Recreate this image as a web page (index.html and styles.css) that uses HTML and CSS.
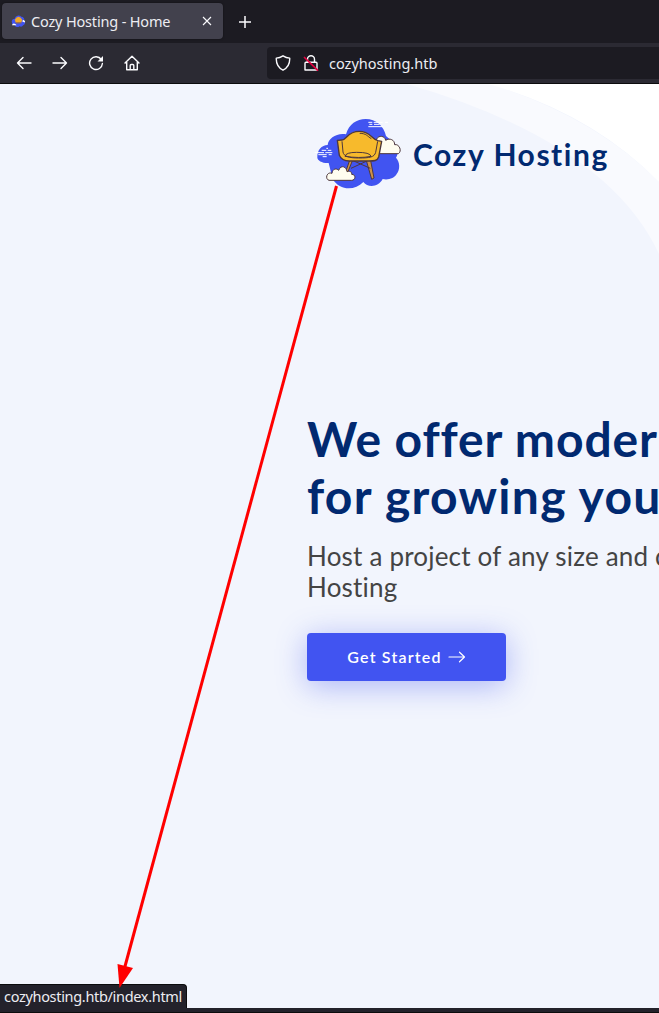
FILE: index.html
```html
<!DOCTYPE html>
<html lang="en">
<head>
<meta charset="utf-8">
<title>Cozy Hosting - Home</title>
<link rel="stylesheet" href="styles.css">
</head>
<body>
<div class="browser">
  <div class="tabs">
    <div class="tab">
      <svg class="favicon" viewBox="0 0 16 16"><path fill="#4154f1" d="M1 9a3 3 0 0 1 3-4 4 4 0 0 1 7-2 3 3 0 0 1 3 4 3 3 0 0 1-1 5 3 3 0 0 1-4 1 3 3 0 0 1-5-1 3 3 0 0 1-3-3z"/><path fill="#f2a928" d="M4 6q4-6 8 0l-1 3H5z"/><path stroke="#a66b1e" d="M5 9.500h6"/><path fill="#fff" d="M1 12q1-3 4-1l1 1zm11-4q1-3 3 0v1z"/></svg>
      <span class="tab-title">Cozy Hosting - Home</span>
      <svg class="close" viewBox="0 0 10 10"><path d="M1 1l8 8M9 1L1 9"/></svg>
    </div>
    <svg class="plus" viewBox="0 0 12 12"><path d="M6 0v12M0 6h12"/></svg>
  </div>
  <div class="toolbar">
    <div class="nav">
      <svg viewBox="0 0 16 16"><path d="M15 8H1.500M7 2.500L1.500 8 7 13.500"/></svg>
      <svg viewBox="0 0 16 16"><path d="M1 8h13.500M9 2.500l5.500 5.500L9 13.500"/></svg>
      <svg viewBox="0 0 16 16"><path d="M13.300 4.500A6.400 6.400 0 1 0 14.400 8.500"/><path fill="#fbfbfe" stroke="none" d="M15 1v5.500H9.500z"/></svg>
      <svg viewBox="0 0 16 16"><path d="M1 8l7-6.800L15 8M2.700 7v7.800h10.600V7M6.200 14.500V10.500q0-1 1-1h1.600q1 0 1 1V14.500"/></svg>
    </div>
    <div class="address">
      <svg viewBox="0 0 16 16"><path d="M8 .8q3.200 2 6.700 2.300C15 9 12.500 13 8 15.200 3.500 13 1 9 1.300 3.100 4.800 2.800 8 .8 8 .8z"/></svg>
      <svg class="lock" viewBox="0 0 16 16"><path d="M4.500 7V4.300a3.500 3.500 0 0 1 7 0V7M3 7.300h10q1 0 1 1v6.700H2V8.300q0-1 1-1z"/><path class="slash" d="M1.500 2.500l13 12.700"/></svg>
      <span class="url">cozyhosting.htb</span>
    </div>
  </div>
  <main class="page">
    <svg class="backdrop" viewBox="0 0 659 924"><path fill="#f9fafe" d="M400 0H490Q595 33 659 98V170Q607 58 407 0z"/><path fill="#fff" d="M488 0H659V98Q591 29 488 0z"/></svg>
    <header class="brand">
      <svg class="logo" viewBox="0 0 315 255">
        <path fill="#4154f1" d="M37 143C36 120 50 105 68 105 70 85 95 68 123 73 132 42 155 27 182 27c31 0 55 21 61 51l25 22c12 13 14 30 5 43 12 12 13 36 2 49-7 13-26 19-42 15-13 25-44 27-58 9-27 28-72 25-92-9l-12-48c-20 1-33-8-34-16z"/>
        <g stroke="#fff" stroke-width="3"><path d="M190 37h12m4 0h27m7 0h9M193 43h9m5 0h17M190 50h44M29 128h28m4 0h21M40 134h25m6 0h9M50 121h14m4 0h11M53 140h12M64 115h5"/></g>
        <g fill="#fffdf0" stroke="#4d373c" stroke-width="3" stroke-linejoin="round">
          <path d="M207 131c-6-19 0-33 8-44 6-12 25-10 27 4 12-8 27-2 27 13 14-3 23 20 11 27z"/>
          <path fill="#cf9245" d="M135 148l8 2-20 50-5-3zM183 148l13-1 11 57-7 4z"/>
          <path fill="none" d="M138 175l52-24m-48 0l54 24"/>
          <path fill="#f7ba2c" stroke-width="4" d="M97 91l14-1c15-1 16-26 52-26 34 0 34 22 56 28l11 2-9 47c-4 12-14 12-29 12h-59c-18 0-26-7-30-17z"/>
          <path fill="none" d="M111 94l3 32c2 13 18 18 47 18 33 0 47-2 51-17l6-33M120 139q2-12 35-12 41 0 43 12c-22 5-53 4-78 0M164 70c20 0 23 9 35 16"/>
          <path d="M72 211c-13-4-7-27 9-21 1-14 14-16 20-9 7-19 24-10 25 4 12-3 14 2 14 8 14 0 12 18 0 18z"/>
        </g>
      </svg>
      <span class="brand-name">Cozy Hosting</span>
    </header>
    <section class="hero">
      <h1><span class="line">We offer moder</span><span class="line wide">for growing you</span></h1>
      <p>Host a project of any size and c<br>Hosting</p>
      <a class="start"><span>Get Started</span><svg viewBox="0 0 18 12"><path d="M1 6h15M11.500 1.200L16.500 6l-5 4.800"/></svg></a>
    </section>
    <div class="status">cozyhosting.htb/index.html</div>
    <svg class="pointer" viewBox="0 0 240 810"><path d="M226.500 6L14 790" stroke="red" stroke-width="3"/><path fill="red" d="M7.500 784l15.500 4L9.500 808z"/></svg>
  </main>
  <div class="bottom"></div>
</div>
</body>
</html>
```
FILE: styles.css
```css
* { box-sizing: border-box; }
body { margin: 0; overflow: hidden; }
svg { display: block; flex: none; fill: none; }
.browser { width: 659px; height: 1013px; overflow: hidden; display: flex; flex-direction: column; font-family: "Noto Sans", sans-serif; color: #ededf2; }
.tabs { height: 43px; flex: none; display: flex; align-items: center; background: #1c1b22; padding: 0 2px; gap: 16px; }
.tab { width: 221px; height: 36px; margin-top: -1px; padding: 0 11px 0 9px; display: flex; align-items: center; background: #42414d; border-radius: 4px; box-shadow: 0 0 2px #0008; }
.favicon { width: 15px; height: 15px; }
.tab-title { font-size: 14.500px; letter-spacing: -.17px; line-height: 20px; margin-left: 5px; flex: 1; white-space: nowrap; }
.close { width: 10px; height: 10px; stroke: #fbfbfe; stroke-width: 1.100; }
.plus { width: 12px; height: 12px; stroke: #fbfbfe; stroke-width: 1.500; }
.toolbar { height: 41px; flex: none; display: flex; align-items: center; background: #2b2a33; border-bottom: 1px solid #0c0c0d; }
.nav { width: 267px; padding-left: 16px; display: flex; gap: 20px; }
.nav svg, .address svg { width: 16px; height: 16px; stroke: #fbfbfe; stroke-width: 1.400; stroke-linecap: round; stroke-linejoin: round; }
.address { flex: 1; height: 32px; display: flex; align-items: center; padding-left: 8px; gap: 12px; background: #1c1b22; border-radius: 4px 0 0 4px; }
.address .slash { stroke: #e2003f; stroke-width: 1.700; }
.url { font-size: 14.500px; line-height: 20px; margin-left: -2px; }
.page { position: relative; height: 924px; flex: none; overflow: hidden; background: #f2f5fd; color: #012970; }
.backdrop { position: absolute; inset: 0; width: 659px; height: 924px; }
.brand { position: relative; display: flex; align-items: center; height: 85px; margin: 26px 0 0 305px; }
.logo { width: 105px; height: 85px; }
.brand-name { margin-left: 3px; font: 700 30px/36px "Lato", sans-serif; letter-spacing: 1.550px; margin-top: 3px; }
.hero { position: relative; margin: 215px 0 0 307px; font-family: "Lato", sans-serif; white-space: nowrap; }
h1 { margin: 0; font-size: 48px; line-height: 57px; font-weight: 700; letter-spacing: .900px; }
.line { display: block; }
.wide { letter-spacing: 1.300px; }
p { margin: 17px 0 0; color: #444; font: 400 26px/31px "Lato", sans-serif; letter-spacing: .2px; }
.start { display: flex; align-items: center; justify-content: center; gap: 6px; width: 199px; height: 48px; margin-top: 30px; border-radius: 4px; background: #4154f1; color: #fff; font: 600 16px/20px "Lato", sans-serif; letter-spacing: 1.200px; box-shadow: 0 5px 30px rgba(65,84,241,.4); }
.start svg { width: 18px; height: 12px; stroke: #fff; stroke-width: 1.200; stroke-linecap: round; stroke-linejoin: round; }
.status { position: absolute; left: 0; bottom: 0; width: 187px; height: 24px; padding-left: 4px; background: #23222b; border-top: 1px solid #0c0c0d; border-right: 1px solid #0c0c0d; border-radius: 0 4px 0 0; color: #ededf2; font-size: 14.500px; letter-spacing: -.32px; line-height: 23px; white-space: nowrap; }
.pointer { position: absolute; left: 110px; top: 96px; width: 240px; height: 810px; }
.bottom { height: 5px; flex: none; background: #23222b; border-bottom: 1px solid #0c0c0d; }
```
